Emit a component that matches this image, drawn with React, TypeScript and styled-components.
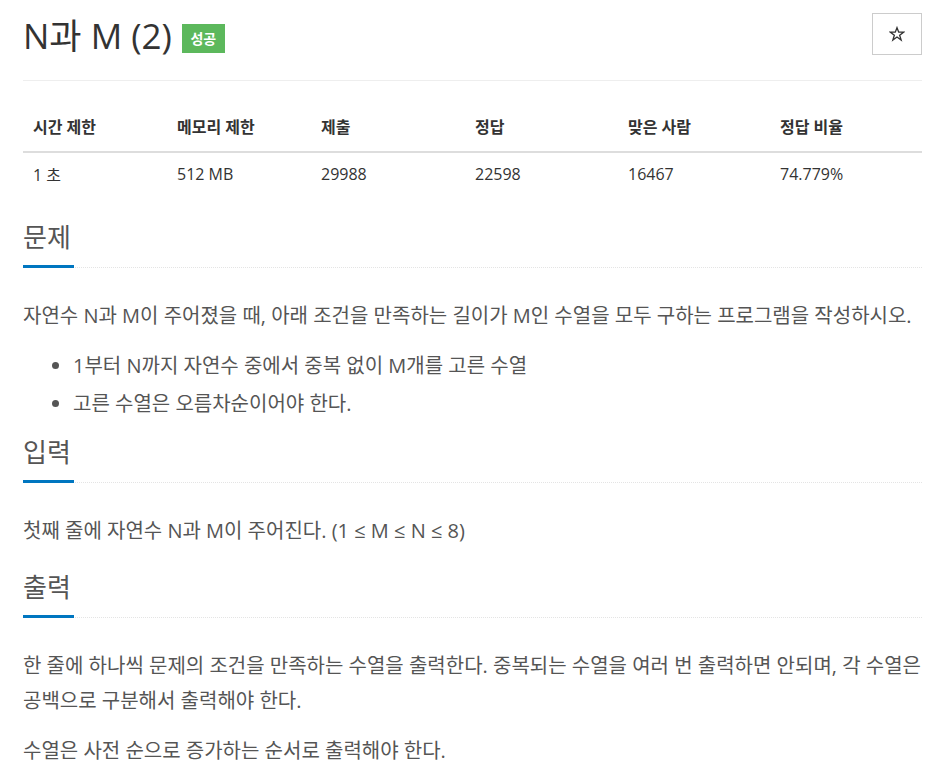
import React from "react";
import styled, { createGlobalStyle } from "styled-components";

const Global = createGlobalStyle`
  html, body { margin: 0; padding: 0; background: #fff; }
  body {
    font-family: "Open Sans", "Noto Sans CJK KR", sans-serif;
    color: #333;
  }
`;

const Page = styled.div`
  padding: 0 22px 0 23px;
`;

const Header = styled.div`
  display: flex;
  align-items: flex-start;
  justify-content: space-between;
  border-bottom: 1px solid #eee;
  height: 81px;
  box-sizing: border-box;
`;

const TitleRow = styled.div`
  display: flex;
  align-items: center;
  gap: 10px;
  padding-top: 13px;
`;

const Title = styled.h1`
  margin: 0;
  font-size: 35px;
  font-weight: 400;
  line-height: 46px;
  color: #333;
`;

const Badge = styled.span`
  display: inline-flex;
  align-items: center;
  justify-content: center;
  width: 43px;
  height: 29px;
  margin-top: 4px;
  background: #5cb85c;
  color: #fff;
  font-size: 14px;
  font-weight: 700;
`;

const StarButton = styled.button`
  margin-top: 13px;
  width: 50px;
  height: 42px;
  border: 1px solid #ccc;
  background: #fff;
  display: flex;
  align-items: center;
  justify-content: center;
  padding: 0;
  color: #333;
`;

const Table = styled.table`
  width: 100%;
  border-collapse: collapse;
  margin: 19px 0 18px;
  table-layout: fixed;
`;

const Th = styled.th`
  text-align: left;
  font-size: 16px;
  font-weight: 700;
  padding: 14px 10px 13px;
  border-bottom: 2px solid #ddd;
  color: #333;
`;

const Td = styled.td`
  font-size: 16px;
  padding: 9px 10px;
  color: #333;
`;

const Section = styled.section`
  margin-top: 7px;
`;

const Headline = styled.div`
  border-bottom: 1px dotted #e4e4e4;
  display: flex;
`;

const HeadTitle = styled.h2`
  margin: 0;
  font-size: 26px;
  font-weight: 400;
  line-height: 38px;
  padding-top: 5px;
  padding-bottom: 9px;
  color: #555;
  border-bottom: 3px solid #0076c0;
  margin-bottom: -1px;
  width: 51px;
`;

const Body = styled.div`
  padding-top: 30px;
  font-size: 20px;
  line-height: 35px;
  color: #555;
`;

const P = styled.p`
  margin: 0 0 15px;
`;

const List = styled.ul`
  margin: 0 0 3px;
  padding-left: 50px;
`;

const Li = styled.li`
  margin-bottom: 3px;
`;

const Star = () => (
  <svg width="16" height="16" viewBox="0 0 24 24" fill="none" stroke="#333" strokeWidth="2" strokeLinejoin="miter">
    <polygon points="12,2.5 14.6,9.3 21.8,9.3 16,13.8 18.2,21 12,16.6 5.8,21 8,13.8 2.2,9.3 9.4,9.3" />
  </svg>
);

const cols = [144, 144, 154, 153, 152, 152];
const heads = ["시간 제한", "메모리 제한", "제출", "정답", "맞은 사람", "정답 비율"];
const vals = ["1 초", "512 MB", "29988", "22598", "16467", "74.779%"];

export default function App() {
  return (
    <Page>
      <Global />
      <Header>
        <TitleRow>
          <Title>N과 M (2)</Title>
          <Badge>성공</Badge>
        </TitleRow>
        <StarButton aria-label="즐겨찾기">
          <Star />
        </StarButton>
      </Header>
      <Table>
        <colgroup>
          {cols.map((w, i) => (
            <col key={i} style={{ width: w }} />
          ))}
        </colgroup>
        <thead>
          <tr>
            {heads.map((h) => (
              <Th key={h}>{h}</Th>
            ))}
          </tr>
        </thead>
        <tbody>
          <tr>
            {vals.map((v) => (
              <Td key={v}>{v}</Td>
            ))}
          </tr>
        </tbody>
      </Table>
      <Section>
        <Headline>
          <HeadTitle>문제</HeadTitle>
        </Headline>
        <Body>
          <P>자연수 N과 M이 주어졌을 때, 아래 조건을 만족하는 길이가 M인 수열을 모두 구하는 프로그램을 작성하시오.</P>
          <List>
            <Li>1부터 N까지 자연수 중에서 중복 없이 M개를 고른 수열</Li>
            <Li>고른 수열은 오름차순이어야 한다.</Li>
          </List>
        </Body>
      </Section>
      <Section>
        <Headline>
          <HeadTitle>입력</HeadTitle>
        </Headline>
        <Body>
          <P>첫째 줄에 자연수 N과 M이 주어진다. (1 ≤ M ≤ N ≤ 8)</P>
        </Body>
      </Section>
      <Section>
        <Headline>
          <HeadTitle>출력</HeadTitle>
        </Headline>
        <Body>
          <P>한 줄에 하나씩 문제의 조건을 만족하는 수열을 출력한다. 중복되는 수열을 여러 번 출력하면 안되며, 각 수열은 공백으로 구분해서 출력해야 한다.</P>
          <P>수열은 사전 순으로 증가하는 순서로 출력해야 한다.</P>
        </Body>
      </Section>
    </Page>
  );
}
